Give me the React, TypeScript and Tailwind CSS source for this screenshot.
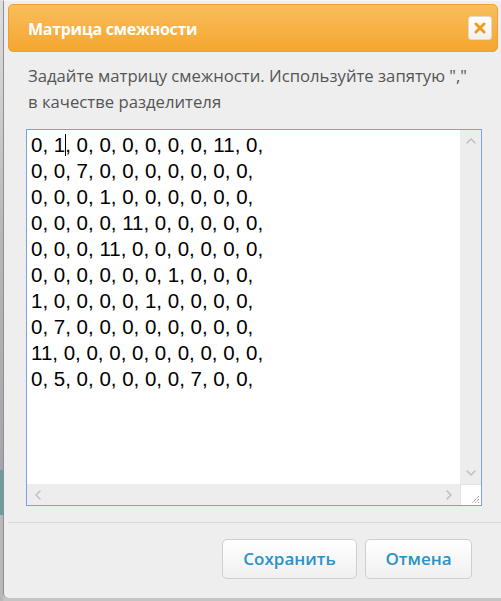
import { ChevronUp, ChevronDown, ChevronLeft, ChevronRight } from 'lucide-react';

const rows = [
  '0, 0, 7, 0, 0, 0, 0, 0, 0, 0,',
  '0, 0, 0, 1, 0, 0, 0, 0, 0, 0,',
  '0, 0, 0, 0, 11, 0, 0, 0, 0, 0,',
  '0, 0, 0, 11, 0, 0, 0, 0, 0, 0,',
  '0, 0, 0, 0, 0, 0, 1, 0, 0, 0,',
  '1, 0, 0, 0, 0, 1, 0, 0, 0, 0,',
  '0, 7, 0, 0, 0, 0, 0, 0, 0, 0,',
  '11, 0, 0, 0, 0, 0, 0, 0, 0, 0,',
  '0, 5, 0, 0, 0, 0, 0, 7, 0, 0,',
];

function App() {
  return (
    <div className="flex h-[601px] w-[501px] overflow-hidden bg-[#c4c4c4] font-['Open_Sans',sans-serif]">
      {/* page behind the dialog */}
      <div className="flex w-[3px] flex-col">
        <div className="h-[470px] bg-gradient-to-b from-[#dedede] via-[#b9b6bb] to-[#a9a4ab]" />
        <div className="h-[45px] bg-[#6c9c9c]" />
        <div className="flex-1 bg-[#b8b8b8]" />
      </div>

      <div className="flex h-[598px] flex-1 flex-col rounded-bl-[5px] border-l border-t border-l-[#8f8f8f] border-t-[#f7f7f7] bg-[#eeeeee]">
        {/* title bar */}
        <div className="mr-[3px] ml-[4px] mt-[3px] flex h-[48px] items-center justify-between rounded-[5px] border border-[#eba232] bg-gradient-to-b from-[#f9bd5a] to-[#f5a62d] pl-[19px] pr-[5px]">
          <span className="pt-[2px] text-[16px] font-bold tracking-[-0.3px] text-white">Матрица смежности</span>
          <button className="flex h-[24px] w-[24px] items-center justify-center rounded-[3px] border border-[#e3d9c8] bg-gradient-to-b from-white to-[#f1f1f1]">
            <svg width="12" height="12" viewBox="0 0 12 12">
              <path d="M2 2 L10 10 M10 2 L2 10" stroke="#f39a1a" strokeWidth="3" strokeLinecap="round" />
            </svg>
          </button>
        </div>

        {/* description */}
        <p className="mt-[11px] pl-[24px] pr-[10px] text-[16.7px] leading-[26px] text-[#555555]">
          Задайте матрицу смежности. Используйте запятую ","
          <br />в качестве разделителя
        </p>

        {/* textarea */}
        <div className="ml-[22px] mt-[14px] grid h-[377px] w-[456px] grid-cols-[1fr_21px] grid-rows-[1fr_21px] border border-[#7aa0e6] bg-white">
          <div
            role="textbox"
            className="overflow-hidden whitespace-pre pl-[4px] pt-[2px] font-['Liberation_Sans',Arial,sans-serif] text-[20.5px] leading-[26px] text-black"
          >
            <div>
              0, 1<span className="inline-block h-[22px] w-px bg-black align-[-4px] -mr-px" />, 0, 0, 0, 0, 0, 0, 11, 0,
            </div>
            {rows.map((r, i) => (
              <div key={i}>{r}</div>
            ))}
          </div>
          <div className="flex flex-col items-center justify-between bg-[#ededed] py-[3px]">
            <ChevronUp size={16} strokeWidth={2} className="text-[#bdbdbd]" />
            <ChevronDown size={16} strokeWidth={2} className="text-[#bdbdbd]" />
          </div>
          <div className="flex items-center justify-between bg-[#ededed] px-[3px]">
            <ChevronLeft size={16} strokeWidth={2} className="text-[#bdbdbd]" />
            <ChevronRight size={16} strokeWidth={2} className="text-[#bdbdbd]" />
          </div>
          <div className="flex items-end justify-end border-l border-t border-[#e4e4e4] bg-white p-[1px]">
            <svg width="10" height="10" viewBox="0 0 10 10">
              <path d="M9 2 L2 9 M9 5 L5 9 M9 8 L8 9" stroke="#6b6b6b" strokeWidth="1" strokeDasharray="1 1" />
            </svg>
          </div>
        </div>

        {/* footer */}
        <div className="ml-[4px] mt-[16px] h-px bg-[#d9d9d9]" />
        <div className="flex justify-end gap-[8px] pr-[29px] pt-[16px]">
          <button className="h-[40px] w-[135px] rounded-[5px] border border-[#cfcfcf] bg-gradient-to-b from-white to-[#f0f0f0] text-[17px] font-semibold text-[#2a93c6]">
            Сохранить
          </button>
          <button className="h-[40px] w-[107px] rounded-[5px] border border-[#cfcfcf] bg-gradient-to-b from-white to-[#f0f0f0] text-[17px] font-semibold text-[#2a93c6]">
            Отмена
          </button>
        </div>
      </div>
    </div>
  );
}

export default App;
